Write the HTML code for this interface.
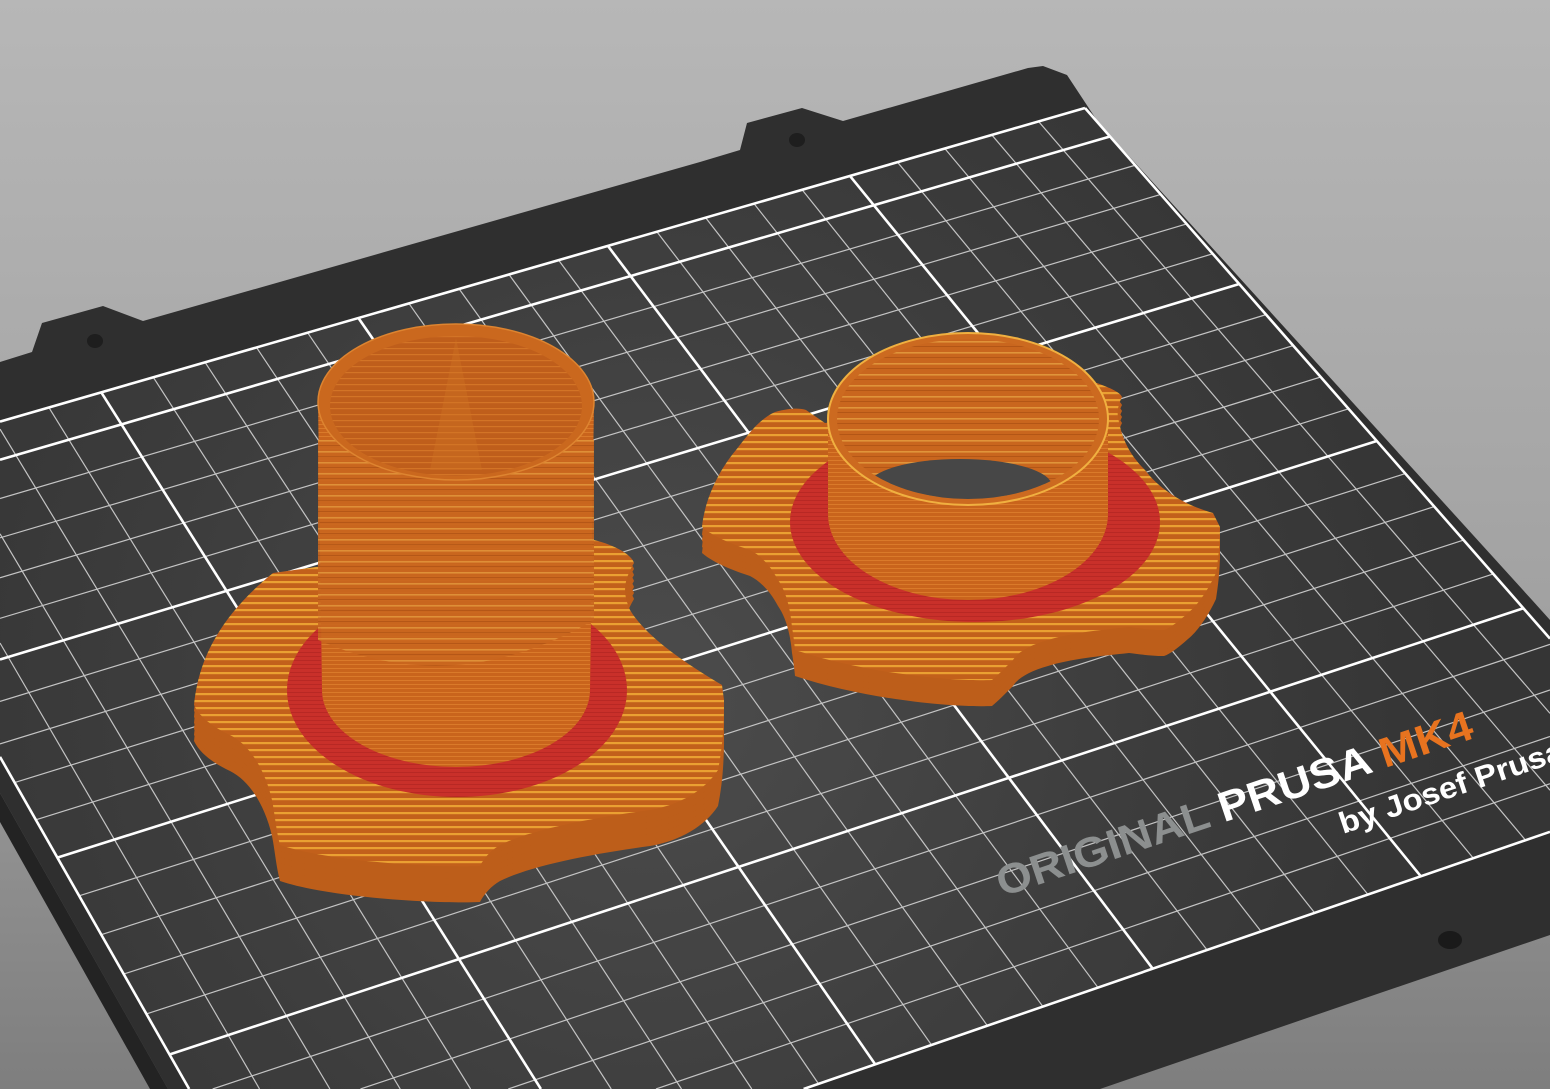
<!DOCTYPE html>
<html><head><meta charset="utf-8">
<style>
html,body{margin:0;padding:0;width:1550px;height:1089px;overflow:hidden;background:#999;position:relative;}
svg{display:block;position:absolute;left:0;top:0;overflow:hidden}
</style></head>
<body>
<svg id="s" width="1550" height="1089" viewBox="0 0 1550 1089" overflow="hidden" xmlns="http://www.w3.org/2000/svg">
<defs>
<linearGradient id="bg" x1="0" y1="0" x2="0" y2="1">
<stop offset="0" stop-color="#b7b7b7"/><stop offset="0.55" stop-color="#a2a2a2"/><stop offset="1" stop-color="#7e7e7e"/>
</linearGradient>
<radialGradient id="sheet" cx="650" cy="700" r="800" gradientUnits="userSpaceOnUse">
<stop offset="0" stop-color="#4c4c4c"/><stop offset="0.6" stop-color="#3d3d3d"/><stop offset="1" stop-color="#353535"/>
</radialGradient>
<pattern id="st" width="8" height="7" patternUnits="userSpaceOnUse">
<rect width="8" height="7" fill="#c2601b"/><rect width="8" height="2.2" fill="#eaa032"/>
</pattern>
<pattern id="col" width="8" height="4" patternUnits="userSpaceOnUse">
<rect width="8" height="4" fill="#c9641c"/><rect width="8" height="1" fill="#da7a2a"/>
</pattern>
<pattern id="thr" width="8" height="11" patternUnits="userSpaceOnUse">
<rect width="8" height="11" fill="#c9661e"/><rect width="8" height="1.6" fill="#e0943a"/><rect y="5" width="8" height="1" fill="#b35616"/>
</pattern>
<pattern id="inn" width="8" height="6" patternUnits="userSpaceOnUse">
<rect width="8" height="6" fill="#bf5e1b"/><rect width="8" height="1.2" fill="#d37426"/>
</pattern>
<pattern id="red" width="4" height="4" patternUnits="userSpaceOnUse">
<rect width="4" height="4" fill="#c9302a"/><rect width="4" height="1" fill="#b82824"/>
</pattern>
<clipPath id="rin"><ellipse cx="968" cy="419" rx="131" ry="80"/></clipPath>
<clipPath id="fr"><rect width="1550" height="1089"/></clipPath>
<path id="f1" d="M194,705 C198,665 215,620 273,573 L323,566 L594,540 C615,545 632,555 634,563 C624,580 622,592 630,610 C645,635 680,660 722,685 L724,700 C724,730 722,750 718,770 C705,790 680,805 650,810 C590,818 530,830 500,845 C488,852 482,862 480,866 C440,868 330,862 280,845 C276,830 275,815 272,800 C265,770 250,745 230,735 C215,728 200,718 194,705 Z"/>
<path id="f2" d="M702,527 C704,505 715,475 736,450 C748,435 758,420 775,412 C790,408 800,408 806,410 L825,423 L1097,383 C1110,388 1120,392 1122,397 C1118,405 1117,412 1118,417 C1122,440 1130,455 1145,470 C1160,490 1185,505 1213,513 L1220,527 C1220,545 1218,560 1216,573 C1208,590 1198,605 1188,613 C1178,622 1170,628 1164,630 C1150,630 1138,628 1129,627 C1100,630 1070,633 1048,640 C1030,645 1018,652 1013,660 C1005,668 998,675 992,680 C950,682 860,672 795,650 C794,640 793,633 792,627 C790,605 785,590 778,580 C770,565 760,555 750,550 C735,545 715,538 702,527 Z"/>
</defs>
<rect width="1550" height="1089" fill="url(#bg)"/>
<path d="M0,362 L32,352 L42,323 L103,306 L143,321 L700,162 L740,150 L747,123 L802,108 L843,121 L1028,68 L1043,66 L1067,75 L1098,122 L1532,600 L1550,620 L1550,935 L1380,993 L1100,1089 L168,1089 L0,793 Z" fill="#2f2f2f"/>
<path d="M0,793 L168,1089 L150,1089 L0,822 Z" fill="#232323"/>
<polygon points="0,422 1085,108 1550,639 1550,832 803,1089 189,1089 0,757" fill="url(#sheet)"/>
<g id="grid"></g>
<ellipse cx="95" cy="341" rx="8" ry="7" fill="#1e1e1e"/>
<ellipse cx="797" cy="140" rx="8" ry="7" fill="#1e1e1e"/>
<ellipse cx="1450" cy="940" rx="12" ry="9" fill="#1a1a1a"/>
<g transform="translate(1002,897) rotate(-18.6)" font-family="'Liberation Sans',sans-serif" font-weight="bold">
<text x="0" y="0" font-size="42" textLength="500" lengthAdjust="spacingAndGlyphs"><tspan fill="#8c8f8f">ORIGINAL </tspan><tspan fill="#ffffff">PRUSA </tspan><tspan fill="#e8731f">MK4</tspan></text>
</g>
<g clip-path="url(#fr)">
<g transform="translate(1343,834) rotate(-18.6)" font-family="'Liberation Sans',sans-serif" font-weight="bold">
<text x="0" y="0" font-size="30" fill="#ffffff" textLength="235" lengthAdjust="spacingAndGlyphs">by Josef Prusa</text>
</g>
</g>

<g fill="#bd5e1a">
<use href="#f1" transform="translate(0,36)"/><use href="#f1" transform="translate(0,30)"/><use href="#f1" transform="translate(0,24)"/><use href="#f1" transform="translate(0,18)"/><use href="#f1" transform="translate(0,12)"/><use href="#f1" transform="translate(0,6)"/>
</g>
<use href="#f1" fill="url(#st)"/>
<ellipse cx="457" cy="690" rx="170" ry="107" fill="url(#red)"/>
<path d="M318,402 L322,690 A134,77 0 0 0 590,690 L594,402 Z" fill="url(#col)"/>
<path d="M318,440 L318,640 Q455,700 594,620 L594,440 Z" fill="url(#thr)" opacity="0.9"/>
<ellipse cx="456" cy="402" rx="138" ry="78" fill="#ca681e" stroke="#dd8430" stroke-width="1.5"/>
<ellipse cx="456" cy="406" rx="126" ry="70" fill="url(#inn)"/>
<path d="M456,338 L430,470 L482,470 Z" fill="#d27526" opacity="0.35"/>

<g fill="#bd5e1a">
<use href="#f2" transform="translate(0,26)"/><use href="#f2" transform="translate(0,20)"/><use href="#f2" transform="translate(0,14)"/><use href="#f2" transform="translate(0,8)"/>
</g>
<use href="#f2" fill="url(#st)"/>
<ellipse cx="975" cy="522" rx="185" ry="100" fill="url(#red)"/>
<path d="M828,419 L828,514 A140,86 0 0 0 1108,514 L1108,419 Z" fill="url(#col)"/>
<ellipse cx="968" cy="419" rx="140" ry="86" fill="#cc6a20" stroke="#f0b040" stroke-width="2"/>
<ellipse cx="968" cy="419" rx="131" ry="80" fill="url(#thr)"/>
<ellipse cx="960" cy="486" rx="92" ry="27" fill="#474747" clip-path="url(#rin)"/>
</svg>
<script>
(function(){
var P=[[-164,469],[1085,108],[1680,787],[290,1266]];
var x0=P[0][0],y0=P[0][1],x1=P[1][0],y1=P[1][1],x2=P[2][0],y2=P[2][1],x3=P[3][0],y3=P[3][1];
var dx1=x1-x2,dx2=x3-x2,dx3=x0-x1+x2-x3,dy1=y1-y2,dy2=y3-y2,dy3=y0-y1+y2-y3;
var den=dx1*dy2-dx2*dy1,g=(dx3*dy2-dx2*dy3)/den,h=(dx1*dy3-dx3*dy1)/den;
var a=x1-x0+g*x1,b=x3-x0+h*x3,c=x0,d=y1-y0+g*y1,e=y3-y0+h*y3,f=y0;
function M(s,t){var w=g*s+h*t+1;return [(a*s+b*t+c)/w,(d*s+e*t+f)/w];}
var G=document.getElementById('grid'),NS='http://www.w3.org/2000/svg',minor=[],major=[];
for(var u=0;u<=250;u+=10){var s=u/250;(u%50==0?major:minor).push([M(s,0),M(s,1)]);}
for(var vb=0;vb<=210;vb+=10){var t=1-vb/210;(vb%50==0||vb==210?major:minor).push([M(0,t),M(1,t)]);}
function clip(p){var ax=p[0][0],ay=p[0][1],bx=p[1][0],by=p[1][1],dx=bx-ax,dy=by-ay,t0=0,t1=1;
 var pp=[-dx,dx,-dy,dy],qq=[ax-0,1550-ax,ay-0,1089-ay];
 for(var i=0;i<4;i++){if(pp[i]==0){if(qq[i]<0)return null;}else{var r=qq[i]/pp[i];if(pp[i]<0){if(r>t1)return null;if(r>t0)t0=r;}else{if(r<t0)return null;if(r<t1)t1=r;}}}
 return [[ax+t0*dx,ay+t0*dy],[ax+t1*dx,ay+t1*dy]];}
function L(p,w,col){p=clip(p);if(!p)return;var l=document.createElementNS(NS,'line');l.setAttribute('x1',p[0][0]);l.setAttribute('y1',p[0][1]);l.setAttribute('x2',p[1][0]);l.setAttribute('y2',p[1][1]);l.setAttribute('stroke',col);l.setAttribute('stroke-width',w);G.appendChild(l);}
minor.forEach(function(p){L(p,1.2,'#c4c4c4');});
major.forEach(function(p){L(p,2.6,'#ffffff');});
})();
</script>
</body></html>
